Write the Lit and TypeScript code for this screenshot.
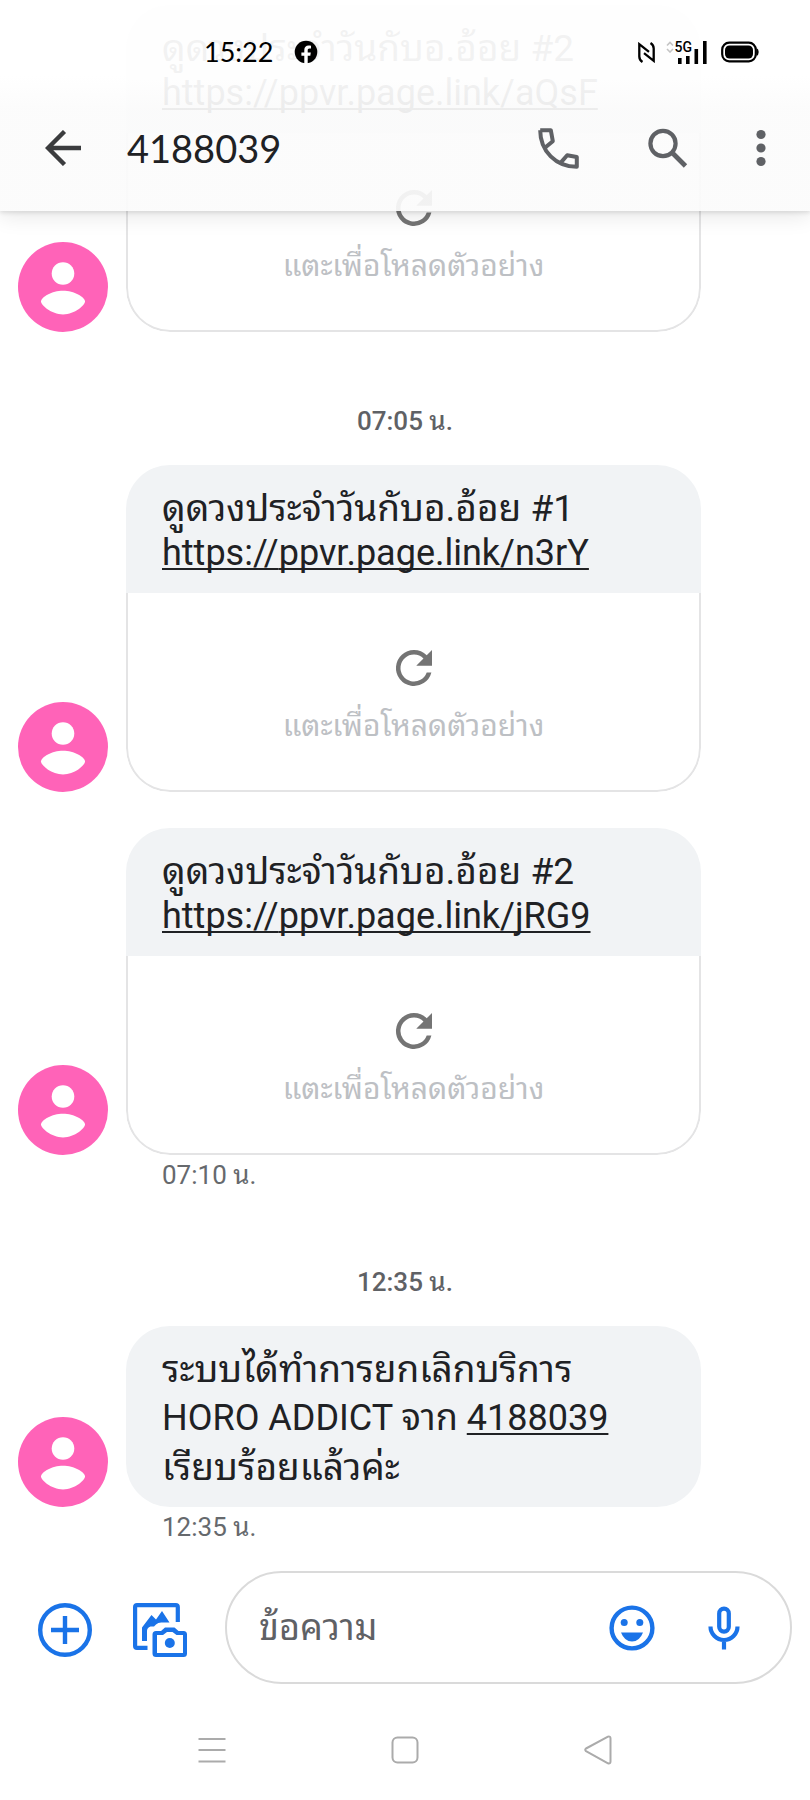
import { LitElement, html, css, svg } from "lit";
import { customElement, property } from "lit/decorators.js";

interface Message {
  text: string;
  link: string;
  time?: string;
}

const refreshIcon = html`<svg class="refresh" viewBox="0 0 24 24" aria-hidden="true">
  <path
    fill="currentColor"
    d="M17.65 6.35A7.96 7.96 0 0 0 12 4a8 8 0 1 0 7.73 10h-2.08A6 6 0 1 1 12 6c1.66 0 3.14.69 4.22 1.78L13 11h7V4z"
  />
</svg>`;

const avatarIcon = html`<svg class="avatar" viewBox="0 0 90 90" aria-hidden="true">
  <circle cx="45" cy="45" r="45" fill="#ff63b8" />
  <circle cx="45" cy="31.5" r="11.3" fill="#fff" />
  <path
    fill="#fff"
    d="M23 59.500C23 55 34 48.700 45 48.700S67 55 67 59.500C67 63 57 72.400 45 72.400S23 63 23 59.500z"
  />
</svg>`;

@customElement("message-row")
export class MessageRow extends LitElement {
  @property({ attribute: false }) message?: Message;

  static styles = css`
    :host {
      display: block;
    }
    .row {
      display: flex;
      align-items: flex-end;
      gap: 18px;
      padding: 0 109px 0 18px;
    }
    .avatar {
      display: block;
      flex: none;
      width: 90px;
      height: 90px;
    }
    .card {
      flex: 1;
      min-width: 0;
      border-radius: 44px;
      overflow: hidden;
    }
    .text {
      padding: 22px 36px 18px;
      background: #f1f3f5;
      color: #202124;
      font-size: 36px;
      line-height: 44px;
    }
    .line {
      margin: 0;
    }
    .thai {
      font-size: 37px;
    }
    .link {
      color: inherit;
      text-decoration: underline;
      text-decoration-thickness: 2px;
      text-underline-offset: 3px;
      text-decoration-skip-ink: none;
    }
    .preview {
      display: flex;
      flex-direction: column;
      align-items: center;
      box-sizing: border-box;
      width: 100%;
      height: 199px;
      margin: 0;
      padding: 48px 0 0;
      border: 2px solid #e4e4e5;
      border-top: 0;
      border-radius: 0 0 44px 44px;
      background: #fff;
      color: #bdc0c4;
      font: inherit;
      font-size: 30px;
      line-height: 38px;
    }
    .refresh {
      width: 54px;
      height: 54px;
      color: #747474;
      margin-bottom: 12px;
    }
    .time {
      padding: 2px 0 0 162px;
      color: #66696d;
      font-size: 26px;
      line-height: 36px;
    }
  `;

  render() {
    const m = this.message;
    if (!m) return null;
    return html`
      <div class="row">
        ${avatarIcon}
        <div class="card">
          <div class="text">
            <p class="line thai">${m.text}</p>
            <p class="line"><a class="link" href="https://${m.link}">https://${m.link}</a></p>
          </div>
          <button class="preview" type="button">${refreshIcon}<span>แตะเพื่อโหลดตัวอย่าง</span></button>
        </div>
      </div>
      ${m.time ? html`<div class="time">${m.time}</div>` : null}
    `;
  }
}

@customElement("notice-row")
export class NoticeRow extends LitElement {
  static styles = [
    MessageRow.styles,
    css`
      .text {
        padding: 19px 36px 15px;
        line-height: 49px;
      }
    `,
  ];

  render() {
    return html`
      <div class="row">
        ${avatarIcon}
        <div class="card">
          <div class="text">
            <p class="line thai">ระบบได้ทำการยกเลิกบริการ</p>
            <p class="line">HORO ADDICT จาก <a class="link" href="tel:4188039">4188039</a></p>
            <p class="line thai">เรียบร้อยแล้วค่ะ</p>
          </div>
        </div>
      </div>
      <div class="time">12:35 น.</div>
    `;
  }
}

const signalBars = [
  [0, 17, 6],
  [8, 15, 8],
  [16.5, 8, 15],
  [25, 0, 23],
].map(([x, y, h]) => svg`<rect x=${x} y=${y} width="3.6" height=${h} />`);

@customElement("status-bar")
export class StatusBar extends LitElement {
  static styles = css`
    :host {
      display: flex;
      align-items: center;
      height: 104px;
      padding: 0 51px 0 204px;
      color: #000;
    }
    .clock {
      font-family: Lato, Roboto, sans-serif;
      font-size: 27px;
      line-height: 32px;
    }
    .facebook {
      width: 24px;
      height: 24px;
      margin-left: 21px;
    }
    .right {
      display: flex;
      align-items: center;
      margin-left: auto;
    }
    .nfc {
      width: 17px;
      height: 21px;
      margin-right: 11px;
    }
    .data {
      display: flex;
      align-items: flex-start;
      margin-right: 14px;
    }
    .arrows {
      width: 8px;
      height: 12px;
      margin-right: 1px;
    }
    .network {
      font-size: 14px;
      line-height: 12px;
      font-weight: 500;
      height: 23px;
    }
    .bars {
      width: 29px;
      height: 23px;
      margin-left: -14px;
    }
    .battery {
      width: 38px;
      height: 22px;
    }
  `;

  render() {
    return html`
      <span class="clock">15:22</span>
      <svg class="facebook" viewBox="0 0 24 24" aria-hidden="true">
        <circle cx="12" cy="12" r="11.3" fill="#000" />
        <path
          fill="#fff"
          d="M10.3 24v-8.2H7.4v-3.3h2.9V10c0-3 1.7-4.500 4.300-4.500 1 0 1.900.1 2.400.2v2.900h-1.500c-1.400 0-1.800.8-1.800 1.700v2.200h3.100l-.5 3.300h-2.600V24z"
        />
      </svg>
      <div class="right">
        <svg class="nfc" viewBox="0 0 17 21" fill="none" stroke="#000" stroke-width="2.300" aria-hidden="true">
          <path d="M4.500 20C2 18.500 1.300 17 1.300 14.500V2.200L11 9.800" />
          <path d="M12.500 1c2.500 1.500 3.200 3 3.200 5.500v12.300L6 11.200" />
        </svg>
        <div class="data">
          <svg class="arrows" viewBox="0 0 8 12" fill="none" stroke="#c4c4c4" stroke-width="1.600" aria-hidden="true">
            <path d="M1 4.500 4 1.500l3 3M1 8l3 3 3-3" />
          </svg>
          <span class="network">5G</span>
          <svg class="bars" viewBox="0 0 29 23" fill="#000" aria-hidden="true">${signalBars}</svg>
        </div>
        <svg class="battery" viewBox="0 0 38 22" aria-hidden="true">
          <rect x="1.200" y="1.700" width="33.600" height="18.600" rx="7" fill="none" stroke="#000" stroke-width="2.200" />
          <rect x="4" y="4.500" width="28" height="13" rx="4.500" fill="#000" />
          <path d="M35.500 7q2.200 1 2.200 4t-2.200 4z" fill="#000" />
        </svg>
      </div>
    `;
  }
}

@customElement("app-root")
export class AppRoot extends LitElement {
  static styles = css`
    :host {
      position: relative;
      display: flex;
      flex-direction: column;
      min-height: 100vh;
      background: #fff;
      color: #202124;
      font-family: Roboto, "Noto Sans Thai Looped", "Noto Sans", sans-serif;
    }
    button {
      display: flex;
      flex: none;
      padding: 0;
      border: 0;
      background: none;
      color: inherit;
    }
    svg {
      display: block;
    }
    .header {
      position: absolute;
      z-index: 1;
      top: 0;
      left: 0;
      right: 0;
      background: linear-gradient(
        rgba(255, 255, 255, 0.94) 0,
        rgba(255, 255, 255, 0.94) 76px,
        rgba(251, 251, 251, 0.93) 112px
      );
      box-shadow: 0 2px 4px rgba(0, 0, 0, 0.1), 0 6px 20px rgba(0, 0, 0, 0.09);
    }
    .toolbar {
      display: flex;
      align-items: center;
      height: 88px;
      padding: 0 44px 19px 45px;
      color: #5f6165;
    }
    .back {
      color: #3b3c3e;
    }
    .title {
      flex: 1;
      margin: 0 0 0 46px;
      color: #202124;
      font-family: Lato, Roboto, sans-serif;
      font-size: 38px;
      font-weight: 400;
      line-height: 48px;
    }
    .icon-36 {
      width: 36px;
      height: 36px;
    }
    .icon-41 {
      width: 41px;
      height: 41px;
    }
    .icon-54 {
      width: 54px;
      height: 54px;
    }
    .dots {
      width: 10px;
      height: 38px;
    }
    .actions {
      display: flex;
      align-items: center;
      gap: 68px;
    }
    .thread {
      display: flex;
      flex-direction: column;
      padding-top: 5px;
    }
    .stamp {
      padding: 72px 0 27px;
      text-align: center;
      color: #5f6165;
      font-size: 26px;
      font-weight: 500;
      line-height: 34px;
    }
    .pair {
      display: flex;
      flex-direction: column;
      gap: 36px;
    }
    .composer {
      display: flex;
      align-items: center;
      padding: 26px 18px 0 38px;
      color: #1a73e8;
    }
    .attach {
      padding-top: 4px;
    }
    .gallery {
      margin: 0 38px 0 41px;
    }
    .field {
      display: flex;
      flex: 1;
      align-items: center;
      box-sizing: border-box;
      min-width: 0;
      height: 113px;
      padding: 0 50px 0 32px;
      border: 2px solid #dadada;
      border-radius: 57px;
      background: #fff;
    }
    .input {
      flex: 1;
      min-width: 0;
      height: 60px;
      padding: 0;
      border: 0;
      outline: 0;
      background: none;
      color: #202124;
      font: inherit;
      font-size: 36px;
    }
    .input::placeholder {
      color: #5f6165;
      opacity: 1;
    }
    .emoji {
      width: 46px;
      height: 46px;
      margin-right: 53px;
    }
    .mic {
      width: 32px;
      height: 44px;
    }
    .system {
      display: grid;
      grid-template-columns: repeat(3, 1fr);
      justify-items: center;
      align-items: center;
      height: 100px;
      margin-top: auto;
      padding: 0 115px;
      color: #ababab;
    }
    .key {
      width: 30px;
      height: 30px;
    }
  `;

  private first: Message = { text: "ดูดวงประจำวันกับอ.อ้อย #2", link: "ppvr.page.link/aQsF" };
  private pair: Message[] = [
    { text: "ดูดวงประจำวันกับอ.อ้อย #1", link: "ppvr.page.link/n3rY" },
    { text: "ดูดวงประจำวันกับอ.อ้อย #2", link: "ppvr.page.link/jRG9", time: "07:10 น." },
  ];

  private renderHeader() {
    return html`
      <header class="header">
        <status-bar></status-bar>
        <div class="toolbar">
          <button class="back" type="button" aria-label="กลับ">
            <svg class="icon-36" viewBox="0 0 36 36" fill="none" stroke="currentColor" stroke-width="4.400">
              <path d="M36 18H4M19.500 1.500 3 18l16.500 16.500" />
            </svg>
          </button>
          <h1 class="title">4188039</h1>
          <div class="actions">
            <button type="button" aria-label="โทร">
              <svg class="icon-41" viewBox="0 0 41 41" fill="none" stroke="currentColor" stroke-width="4" stroke-linejoin="round">
                <path d="M2.200 2.200h10.600l2 11-7.600 6.300M2.200 2.200C2.200 23 18 38.800 38.800 38.800V29l-9.600-1.700-6 6.800" />
              </svg>
            </button>
            <button type="button" aria-label="ค้นหา">
              <svg class="icon-41" viewBox="0 0 41 41" fill="none" stroke="currentColor">
                <circle cx="16" cy="15.500" r="12.600" stroke-width="4.200" />
                <path d="m26 25.500 12.500 12.500" stroke-width="4.800" />
              </svg>
            </button>
            <button type="button" aria-label="ตัวเลือกเพิ่มเติม">
              <svg class="dots" viewBox="0 0 10 38" fill="currentColor">
                <circle cx="5" cy="5.500" r="4.600" />
                <circle cx="5" cy="19" r="4.600" />
                <circle cx="5" cy="32.500" r="4.600" />
              </svg>
            </button>
          </div>
        </div>
      </header>
    `;
  }

  private renderComposer() {
    return html`
      <form class="composer">
        <button class="attach" type="button" aria-label="เพิ่ม">
          <svg class="icon-54" viewBox="0 0 54 54" fill="none" stroke="currentColor" stroke-width="4.400">
            <circle cx="27" cy="27" r="24.800" />
            <path d="M27 13v28M13 27h28" />
          </svg>
        </button>
        <button class="attach gallery" type="button" aria-label="แกลเลอรี">
          <svg class="icon-54" viewBox="0 0 54 54" fill="none" stroke="currentColor" stroke-width="4.200">
            <path d="M44.800 19V4q0-1.900-1.900-1.900H4Q2.100 2.100 2.100 4v38.900q0 1.900 1.900 1.900h10.500" />
            <path
              fill="currentColor"
              stroke="none"
              d="M9 38V24.500l9.500-12.500 4.500 4.500L29 8l7.500 11.500h-7q-4-.5-6.500 2l-2 2h-3.500q-3.500 1-3.500 4.500v10z"
            />
            <path
              fill="currentColor"
              fill-rule="evenodd"
              stroke="none"
              d="M32 24.500h9.500l4 3.500h5q3.500 0 3.500 3.500v19q0 3.500-3.500 3.500H23q-3.500 0-3.500-3.500v-19Q19.500 28 23 28h5zM24 32v18h26V32h-6.500l-4-3h-5.500l-4 3z"
            />
            <circle cx="36.800" cy="40" r="5" fill="currentColor" stroke="none" />
          </svg>
        </button>
        <div class="field">
          <input class="input" type="text" placeholder="ข้อความ" aria-label="ข้อความ" />
          <button type="button" aria-label="อีโมจิ">
            <svg class="emoji" viewBox="0 0 46 46" fill="currentColor">
              <circle cx="23" cy="23" r="20.400" fill="none" stroke="currentColor" stroke-width="4.400" />
              <circle cx="15.200" cy="17.500" r="3.500" />
              <circle cx="30.800" cy="17.500" r="3.500" />
              <path d="M12 27.500h22Q30.500 36.500 23 36.500T12 27.500z" />
            </svg>
          </button>
          <button type="button" aria-label="พูด">
            <svg class="mic" viewBox="0 0 32 44" fill="none" stroke="currentColor" stroke-width="4.200">
              <rect x="11.200" y="2.600" width="9.600" height="23" rx="4.800" />
              <path d="M2.500 20.500a13.500 13.500 0 0 0 27 0M16 34v9.500" />
            </svg>
          </button>
        </div>
      </form>
    `;
  }

  render() {
    return html`
      ${this.renderHeader()}
      <main class="thread">
        <message-row .message=${this.first}></message-row>
        <div class="stamp">07:05 น.</div>
        <div class="pair">
          ${this.pair.map((m) => html`<message-row .message=${m}></message-row>`)}
        </div>
        <div class="stamp">12:35 น.</div>
        <notice-row></notice-row>
      </main>
      ${this.renderComposer()}
      <nav class="system">
        <button type="button" aria-label="แอปล่าสุด">
          <svg class="key" viewBox="0 0 30 30" fill="none" stroke="currentColor" stroke-width="2">
            <path d="M1.500 4h27M1.500 15h27M1.500 26.500h27" />
          </svg>
        </button>
        <button type="button" aria-label="หน้าแรก">
          <svg class="key" viewBox="0 0 30 30" fill="none" stroke="currentColor" stroke-width="2">
            <rect x="2.500" y="2.500" width="25" height="25" rx="5" />
          </svg>
        </button>
        <button type="button" aria-label="ย้อนกลับ">
          <svg class="key" viewBox="0 0 30 30" fill="none" stroke="currentColor" stroke-width="2" stroke-linejoin="round">
            <path d="M25 1.600 3 13.500q-1.600 1.300 0 2.600L25 28.300q2.500.7 2.500-1.800v-23q0-2.500-2.500-1.900z" />
          </svg>
        </button>
      </nav>
    `;
  }
}
